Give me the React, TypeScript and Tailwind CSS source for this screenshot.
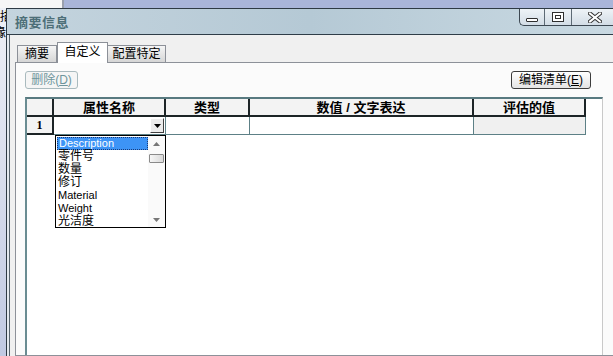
import React from "react";

const ui = "font-['Liberation_Sans','Noto_Sans_CJK_SC',sans-serif]";

const choices = ["Description", "零件号", "数量", "修订", "Material", "Weight", "光洁度"];

function CaptionButtons() {
  return (
    <div className="ml-auto flex h-[17px] self-start rounded-bl-[5px] border-b border-l border-[#3d4852] bg-gradient-to-b from-[#eef3f7] to-[#d3dde6]">
      <div className="flex w-[25px] items-center justify-center border-r border-[#5d6a75]">
        <div className="mt-[5px] h-[4px] w-[12px] rounded-[1px] border border-[#2f2f2f] bg-white" />
      </div>
      <div className="flex w-[27px] items-center justify-center border-r border-[#5d6a75]">
        <div className="flex h-[10px] w-[12px] items-center justify-center border border-[#2f2f2f] bg-white">
          <div className="h-[4px] w-[6px] border border-[#2f2f2f]" />
        </div>
      </div>
      <div className="flex w-[41px] items-center justify-center pl-[4px]">
        <svg width="14" height="11" viewBox="0 0 14 11">
          <path d="M2 1.5 L12 9.5 M12 1.5 L2 9.5" stroke="#333" strokeWidth="4" strokeLinecap="square" />
          <path d="M2 1.5 L12 9.5 M12 1.5 L2 9.5" stroke="#fff" strokeWidth="2" strokeLinecap="square" />
        </svg>
      </div>
    </div>
  );
}

function HeaderCell({ label }: { label: string }) {
  return (
    <div className="flex h-[18px] items-center justify-center border-r-2 border-b-2 border-[#1c2426] bg-[#f3f3f3] text-[13px] font-bold leading-none text-black">
      {label}
    </div>
  );
}

function DropList() {
  return (
    <div className="absolute left-[28px] top-[36px] flex h-[93px] w-[111px] border border-black bg-white">
      <div className="flex flex-1 flex-col pl-[1px] pt-[1px]">
        {choices.map((c, i) => (
          <div
            key={c}
            className={
              i === 0
                ? "h-[13px] border border-dotted border-[#1a3c7a] bg-[#3d94f6] pl-[1px] text-[11px] leading-[11px] text-white"
                : /^[A-Za-z]/.test(c)
                ? "h-[13px] pl-[1px] text-[11px] leading-[13px] text-black"
                : "h-[13px] pl-[1px] text-[12px] leading-[13px] text-black"
            }
          >
            {c}
          </div>
        ))}
      </div>
      <div className="flex w-[17px] flex-col bg-[#fafafa]">
        <div className="flex h-[15px] items-center justify-center">
          <svg width="7" height="4" viewBox="0 0 7 4"><path d="M0 4 L3.5 0 L7 4 Z" fill="#777" /></svg>
        </div>
        <div className="mx-[1px] mt-[3px] h-[9px] rounded-[1px] border border-[#8a8a8a] bg-gradient-to-r from-[#f6f6f6] to-[#d9d9d9]" />
        <div className="flex-1" />
        <div className="flex h-[15px] items-center justify-center">
          <svg width="7" height="4" viewBox="0 0 7 4"><path d="M0 0 L7 0 L3.5 4 Z" fill="#777" /></svg>
        </div>
      </div>
    </div>
  );
}

function Grid() {
  return (
    <div className="relative mt-[8px] w-[578px] flex-1 border-t-2 border-l-2 border-r border-t-[#587a80] border-l-[#6a8c92] border-r-[#c9c9c9] bg-white">
      <div className="grid w-[559px] grid-cols-[27px_112px_84px_224px_112px]">
        <HeaderCell label="" />
        <HeaderCell label="属性名称" />
        <HeaderCell label="类型" />
        <HeaderCell label="数值 / 文字表达" />
        <HeaderCell label="评估的值" />

        <div className="flex h-[18px] items-center justify-center border-r-2 border-b-2 border-[#1c2426] bg-[#f3f3f3] font-['Liberation_Serif',serif] text-[12px] font-bold">
          1
        </div>
        <div className="flex h-[18px] items-center justify-end border-r border-b border-[#5d8086] bg-white pr-[1px]">
          <div className="flex h-[15px] w-[14px] items-center justify-center border border-t-white border-l-white border-r-[#404040] border-b-[#404040] bg-[#ececec]">
            <svg width="7" height="4" viewBox="0 0 7 4"><path d="M0 0 L7 0 L3.5 4 Z" fill="#000" /></svg>
          </div>
        </div>
        <div className="h-[18px] border-r border-b border-[#5d8086] bg-white" />
        <div className="h-[18px] border-r border-b border-[#5d8086] bg-white" />
        <div className="h-[18px] border-r border-b border-[#5d8086] bg-[#f0f0f0]" />
      </div>
      <DropList />
    </div>
  );
}

export default function App() {
  return (
    <div className={`${ui} flex h-[356px] w-[613px] flex-col overflow-hidden bg-[#c4cce3]`}>
      <div className="flex h-[8px] shrink-0">
        <div className="w-[64px] border-r-2 border-[#9aa0ad] bg-[#f6f6f6]" />
        <div className="flex-1 bg-[#a9b5d9]" />
      </div>
      <div className="flex flex-1">
        <div className="flex w-[6px] shrink-0 flex-col overflow-hidden bg-gradient-to-b from-[#eef0f6] to-[#c0c9e2] text-[12px] leading-[13px] text-black">
          <span className="mt-[3px] whitespace-nowrap">描</span>
          <span className="-ml-[6px] mt-[3px] whitespace-nowrap">缘</span>
        </div>
        <div className="flex flex-1 flex-col border-t border-l border-[#2e3a44]">
          <div className="flex h-[26px] shrink-0 border-b border-[#2f3d48] bg-gradient-to-r from-[#c4d4de] via-[#b5c9d5] to-[#c9d9e2]">
            <span className="ml-[8px] mt-[7px] text-[13px] font-bold leading-none tracking-[0.5px] text-[#4d6f78]">摘要信息</span>
            <CaptionButtons />
          </div>
          <div className="flex flex-1 border-l-2 border-[#e3e9ef]">
            <div className="flex flex-1 flex-col border-l border-[#56636d] bg-[#f0f0f0] pl-[5px] pt-[7px]">
              <div className="flex items-end pl-[2px] text-[12px] leading-none text-black">
                <div className="flex h-[17px] w-[40px] items-center justify-center border border-b-0 border-[#8c9098] bg-gradient-to-b from-[#f5f5f5] to-[#d6d6d6]">
                  摘要
                </div>
                <div className="relative z-10 -mb-px flex h-[21px] w-[51px] items-center justify-center border border-b-0 border-[#8c9098] bg-white pb-[2px]">
                  自定义
                </div>
                <div className="flex h-[17px] w-[58px] items-center justify-center border border-b-0 border-l-0 border-[#8c9098] bg-gradient-to-b from-[#f5f5f5] to-[#d6d6d6]">
                  配置特定
                </div>
              </div>
              <div className="-mr-[20px] flex flex-1 flex-col border border-[#8d9199] bg-[#fbfbfb] pl-[9px] pt-[8px]">
                <div className="flex w-[566px] justify-between text-[12px] leading-none">
                  <div className="flex h-[18px] w-[53px] items-center justify-center rounded-[3px] border border-[#a9babe] bg-[#f5f5f5] text-[#6f959c]">
                    删除(<span className="underline">D</span>)
                  </div>
                  <div className="flex h-[18px] w-[80px] items-center justify-center rounded-[3px] border border-[#3c3c3c] bg-gradient-to-b from-white to-[#e4e4e4] text-black">
                    编辑清单(<span className="underline">E</span>)
                  </div>
                </div>
                <Grid />
              </div>
            </div>
          </div>
        </div>
      </div>
    </div>
  );
}
